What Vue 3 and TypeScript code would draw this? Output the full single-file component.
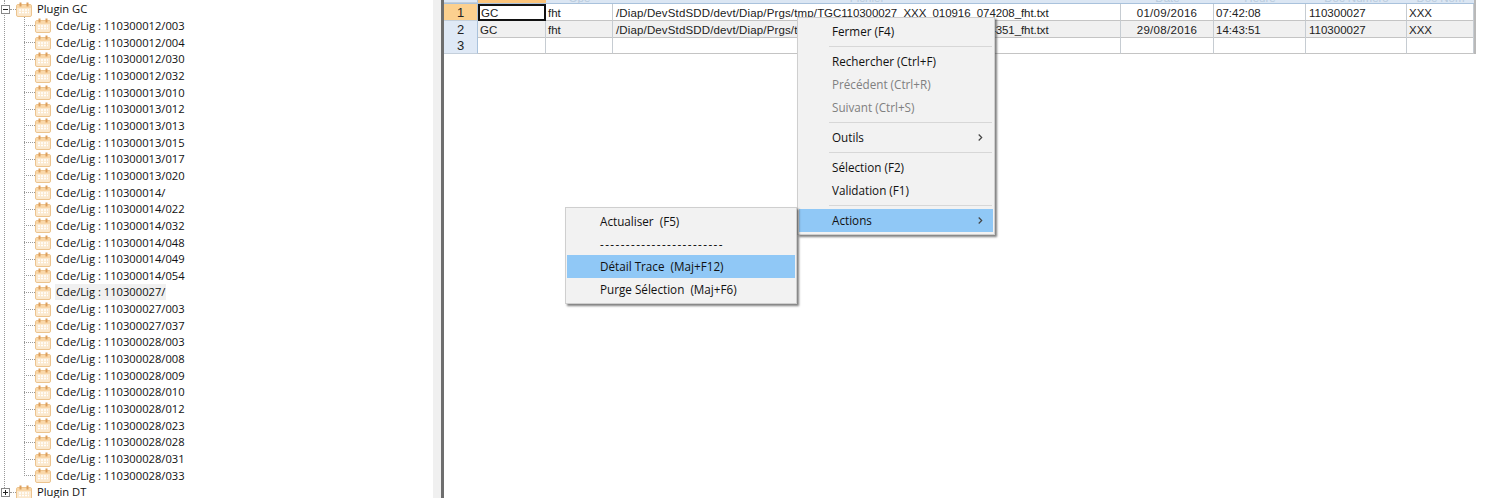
<script setup lang="ts">
const codes: string[] = [
  '110300012/003','110300012/004','110300012/030','110300012/032',
  '110300013/010','110300013/012','110300013/013','110300013/015','110300013/017','110300013/020',
  '110300014/','110300014/022','110300014/032','110300014/048','110300014/049','110300014/054',
  '110300027/','110300027/003','110300027/037',
  '110300028/003','110300028/008','110300028/009','110300028/010','110300028/012','110300028/023','110300028/028','110300028/031','110300028/033'
]
const selectedCode = '110300027/'
const headers = ['Application', 'Opé', 'Fichier', 'Date', 'Heure', 'Doc Numéro', 'Doc Nom']
const dir = '/Diap/DevStdSDD/devt/Diap/Prgs/tmp/'
const rows = [
  { n: 1, app: 'GC', op: 'fht', dir, file: 'TGC110300027_XXX_010916_074208_fht.txt', date: '01/09/2016', time: '07:42:08', num: '110300027', nom: 'XXX' },
  { n: 2, app: 'GC', op: 'fht', dir, file: 'TGC110300027_XXX_290816_144351_fht.txt', date: '29/08/2016', time: '14:43:51', num: '110300027', nom: 'XXX' },
  { n: 3, app: '', op: '', dir: '', file: '', date: '', time: '', num: '', nom: '' }
]
</script>

<template>
  <div class="screen">
    <section class="tree">
      <div class="root-line"></div>
      <div class="child-line"></div>

      <div class="row root">
        <span class="toggle"></span>
        <span class="stub"></span>
        <svg class="cal" viewBox="0 0 16 15"><rect x="0.5" y="2.5" width="15" height="12" rx="1.5" fill="#fbe8cd" stroke="#ecc48f"/><rect x="1" y="3" width="14" height="3" fill="#f9d7a8"/><rect x="3.5" y="0.5" width="2" height="4" fill="#dd9f5c"/><rect x="10.5" y="0.5" width="2" height="4" fill="#dd9f5c"/><path d="M3 8h10M3 10.5h10" stroke="#fff" stroke-width="1.4" stroke-dasharray="2 1"/></svg>
        <span class="label">Plugin GC</span>
      </div>

      <div v-for="c in codes" :key="c" class="row child">
        <span class="dash"></span>
        <svg class="cal" viewBox="0 0 16 15"><rect x="0.5" y="2.5" width="15" height="12" rx="1.5" fill="#fbe8cd" stroke="#ecc48f"/><rect x="1" y="3" width="14" height="3" fill="#f9d7a8"/><rect x="3.5" y="0.5" width="2" height="4" fill="#dd9f5c"/><rect x="10.5" y="0.5" width="2" height="4" fill="#dd9f5c"/><path d="M3 8h10M3 10.5h10" stroke="#fff" stroke-width="1.4" stroke-dasharray="2 1"/></svg>
        <span class="label" :class="{ current: c === selectedCode }">Cde/Lig : {{ c }}</span>
      </div>

      <div class="row root">
        <span class="toggle plus"></span>
        <span class="stub"></span>
        <svg class="cal" viewBox="0 0 16 15"><rect x="0.5" y="2.5" width="15" height="12" rx="1.5" fill="#fbe8cd" stroke="#ecc48f"/><rect x="1" y="3" width="14" height="3" fill="#f9d7a8"/><rect x="3.5" y="0.5" width="2" height="4" fill="#dd9f5c"/><rect x="10.5" y="0.5" width="2" height="4" fill="#dd9f5c"/><path d="M3 8h10M3 10.5h10" stroke="#fff" stroke-width="1.4" stroke-dasharray="2 1"/></svg>
        <span class="label">Plugin DT</span>
      </div>
    </section>

    <div class="splitter"></div>

    <section class="content">
      <div class="grid">
        <div class="tr head">
          <div class="rh corner"></div>
          <div v-for="(h, i) in headers" :key="h" class="td" :class="{ sel: i === 0 }"><span>{{ h }}</span></div>
        </div>
        <div v-for="r in rows" :key="r.n" class="tr" :class="{ alt: r.n === 2 }">
          <div class="rh" :class="{ sel: r.n === 1 }">{{ r.n }}</div>
          <div class="td" :class="{ active: r.n === 1 }">{{ r.app }}</div>
          <div class="td">{{ r.op }}</div>
          <div class="td path"><span class="dir">{{ r.dir }}</span><span class="file">{{ r.file }}</span></div>
          <div class="td date">{{ r.date }}</div>
          <div class="td">{{ r.time }}</div>
          <div class="td num">{{ r.num }}</div>
          <div class="td">{{ r.nom }}</div>
        </div>
      </div>
    </section>

    <div class="menu menu-main">
      <div class="item">Fermer (F4)</div>
      <div class="sep"></div>
      <div class="item">Rechercher (Ctrl+F)</div>
      <div class="item off">Précédent (Ctrl+R)</div>
      <div class="item off">Suivant (Ctrl+S)</div>
      <div class="sep"></div>
      <div class="item">Outils
        <svg class="chev" viewBox="0 0 5 7"><path d="M0.7 0.5l3 3-3 3" fill="none" stroke="#444" stroke-width="1.2"/></svg>
      </div>
      <div class="sep"></div>
      <div class="item">Sélection (F2)</div>
      <div class="item">Validation (F1)</div>
      <div class="sep"></div>
      <div class="item hot">Actions
        <svg class="chev" viewBox="0 0 5 7"><path d="M0.7 0.5l3 3-3 3" fill="none" stroke="#444" stroke-width="1.2"/></svg>
      </div>
    </div>

    <div class="menu menu-sub">
      <div class="item">Actualiser&nbsp; (F5)</div>
      <div class="item dashes">------------------------</div>
      <div class="item hot">Détail Trace&nbsp; (Maj+F12)</div>
      <div class="item">Purge Sélection&nbsp; (Maj+F6)</div>
    </div>
  </div>
</template>

<style scoped>
.screen {
  position: relative;
  display: flex;
  width: 1495px;
  height: 498px;
  overflow: hidden;
  background: #fff;
  color: #111;
}

/* tree */
.tree {
  position: relative;
  width: 433px;
  flex: none;
  padding-top: 1px;
  box-sizing: border-box;
  font-family: "Open Sans", sans-serif;
  font-size: 11.2px;
}
.root-line {
  position: absolute;
  left: 4px;
  top: 0;
  height: 490px;
  border-left: 1px dotted #999;
}
.child-line {
  position: absolute;
  left: 24px;
  top: 17px;
  height: 459px;
  border-left: 1px dotted #999;
}
.row {
  position: relative;
  display: flex;
  align-items: center;
  height: 16.67px;
  white-space: nowrap;
}
.root {
  padding-left: 1px;
}
.toggle {
  position: relative;
  width: 7px;
  height: 7px;
  border: 1px solid #888;
  background: #fff;
  flex: none;
}
.toggle::before {
  content: "";
  position: absolute;
  left: 1px;
  top: 3px;
  width: 5px;
  height: 1px;
  background: #222;
}
.toggle.plus::after {
  content: "";
  position: absolute;
  left: 3px;
  top: 1px;
  width: 1px;
  height: 5px;
  background: #222;
}
.stub {
  width: 6px;
  border-top: 1px dotted #999;
  flex: none;
}
.dash {
  width: 11px;
  margin-left: 24px;
  border-top: 1px dotted #999;
  flex: none;
}
.cal {
  width: 16px;
  height: 15px;
  flex: none;
}
.label {
  margin-left: 4px;
  padding: 0 1px;
  line-height: 16px;
}
.label.current {
  background: #f0f0f0;
}

/* splitter */
.splitter {
  width: 11px;
  flex: none;
  box-sizing: border-box;
  background: #f0f0f0;
  border-right: 3px solid #6e6e6e;
}

/* grid */
.content {
  flex: 1;
  min-width: 0;
  font-family: "Liberation Sans", sans-serif;
  font-size: 11.5px;
  color: #222;
}
.grid {
  width: 1032px;
  border-right: 2px solid #b9b9b9;
  box-sizing: border-box;
}
.tr {
  display: grid;
  grid-template-columns: 34px 68px 67px 508px 93px 92px 101px 67px;
  height: 16.5px;
}
.tr.head {
  height: 3px;
  overflow: hidden;
  background: #dbe6f3;
  border-bottom: 1px solid #a9c2dc;
  box-sizing: content-box;
}
.head .td {
  display: flex;
  align-items: flex-end;
  justify-content: center;
  border: 0;
  padding: 0;
  background: #dbe6f3;
  color: #b9cbdd;
  overflow: hidden;
  height: 3px;
  line-height: 9px;
}
.head .td.sel {
  background: #fbc47b;
  color: #fbc47b;
}
.head .rh {
  height: 3px;
}
.alt .td {
  background: #f0f0f0;
}
.rh {
  display: flex;
  align-items: center;
  justify-content: center;
  padding-top: 1px;
  background: #dfe9f6;
  border-right: 1px solid #a9c2dc;
  border-bottom: 1px solid #c4cfdb;
  font-size: 13px;
  box-sizing: border-box;
}
.rh.sel {
  background: #fbd08f;
}
.td {
  box-sizing: border-box;
  padding: 0 2px;
  line-height: 18px;
  border-right: 1px solid #c6ccd2;
  border-bottom: 1px solid #c4c4c4;
  white-space: nowrap;
  overflow: hidden;
}
.td.path {
  padding-left: 3px;
}
.dir {
  letter-spacing: 0.14px;
}
.file {
  letter-spacing: -0.08px;
}
.td.date {
  text-align: center;
  letter-spacing: 0.3px;
}
.td.num {
  padding-left: 3px;
}
.td.active {
  border: 2px solid #111;
  line-height: 14px;
  padding-left: 1px;
}

/* menus */
.menu {
  position: absolute;
  box-sizing: border-box;
  background: #f2f2f2;
  border: 1px solid #cfcfcf;
  box-shadow: 2px 2px 2px rgba(60, 60, 60, 0.65);
  font-family: "Open Sans", sans-serif;
  font-size: 11.7px;
  color: #111;
  padding: 2px 1px;
}
.menu-main {
  left: 797px;
  top: 17px;
  width: 198px;
  height: 218px;
}
.menu-sub {
  left: 565px;
  top: 207px;
  width: 232px;
  height: 97px;
}
.item {
  position: relative;
  display: flex;
  align-items: center;
  box-sizing: border-box;
  height: 23px;
  padding: 0 0 1px 33px;
}
.item.off {
  color: #808080;
}
.item.hot {
  background: #90c8f6;
}
.dashes {
  height: 22px;
  letter-spacing: 1.4px;
}
.sep {
  height: 1px;
  margin: 3px 1px 3px 30px;
  background: #d7d7d7;
}
.chev {
  position: absolute;
  right: 10px;
  top: 8px;
  width: 5px;
  height: 7px;
}
</style>
